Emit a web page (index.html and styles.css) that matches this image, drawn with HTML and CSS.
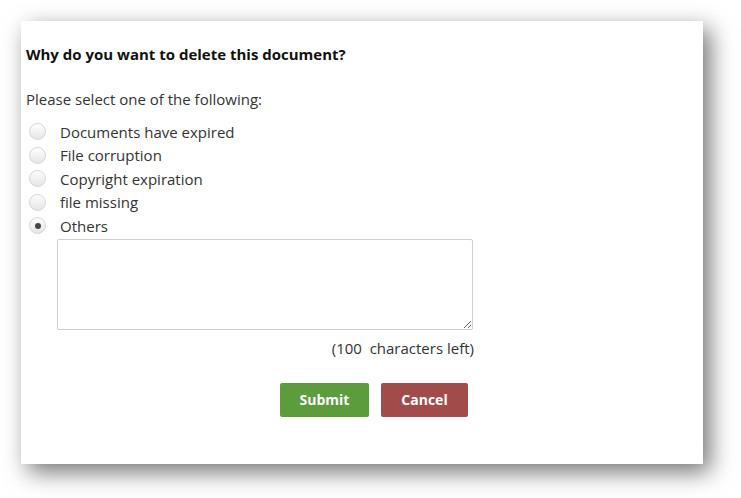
FILE: index.html
```html
<!doctype html>
<html lang="en">
 <head>
	<meta charset="UTF-8">
	<title>Delete document</title>
	<link rel="stylesheet" href="styles.css">
 </head>
 <body>
	<div class="page">
		<form class="dialog">
			<h1 class="title">Why do you want to delete this document?</h1>
			<p class="hint">Please select one of the following:</p>
			<ul class="reasons">
				<li><span class="radio"></span>Documents have expired</li>
				<li><span class="radio"></span>File corruption</li>
				<li><span class="radio"></span>Copyright expiration</li>
				<li><span class="radio"></span>file missing</li>
				<li><span class="radio on"></span>Others</li>
			</ul>
			<div class="other">
				<textarea class="note"></textarea>
				<p class="count">(100&nbsp; characters left)</p>
				<div class="actions">
					<button type="button" class="btn submit">Submit</button>
					<button type="button" class="btn cancel">Cancel</button>
				</div>
			</div>
		</form>
	</div>
 </body>
</html>
```

FILE: styles.css
```css
*{
	padding:0;
	margin:0;
	box-sizing:border-box;
}
body{
	background:#fff;
	font-family:'Open Sans','Noto Sans',sans-serif;
	color:#333;
}
.page{
	padding:21px 38px 34px 21px;
}
.dialog{
	width:682px;
	height:443px;
	background:#fff;
	box-shadow:7px 8px 22px rgba(0,0,0,.55);
	padding:22px 0 0 5px;
}
.title{
	font-size:15px;
	font-weight:bold;
	color:#111;
	line-height:22px;
}
.hint{
	font-size:15px;
	line-height:22px;
	margin-top:23px;
}
.reasons{
	list-style:none;
	margin-top:10px;
}
.reasons li{
	display:flex;
	align-items:center;
	height:23.5px;
	font-size:15px;
}
.radio{
	width:17px;
	height:17px;
	border-radius:50%;
	border:1px solid #d6d6d6;
	background:linear-gradient(#fdfdfd,#e6e6e6);
	margin:0 14px 0 3px;
	display:flex;
	align-items:center;
	justify-content:center;
}
.radio.on::after{
	content:'';
	width:6px;
	height:6px;
	border-radius:50%;
	background:#444;
}
.other{
	width:448px;
	padding-left:31px;
	margin-top:1px;
}
.note{
	display:block;
	width:416px;
	height:91px;
	border:1px solid #cfcfcf;
	border-radius:2px;
	resize:both;
}
.count{
	text-align:right;
	font-size:15px;
	line-height:22px;
	margin-top:7px;
}
.actions{
	display:flex;
	justify-content:flex-end;
	gap:12px;
	margin-top:24px;
	padding-right:6px;
}
.btn{
	height:34px;
	border:0;
	border-radius:2px;
	color:#fff;
	font-family:inherit;
	font-size:14px;
	font-weight:bold;
}
.submit{
	width:89px;
	background:#5c9c3c;
}
.cancel{
	width:87px;
	background:#a24b4b;
}
```
